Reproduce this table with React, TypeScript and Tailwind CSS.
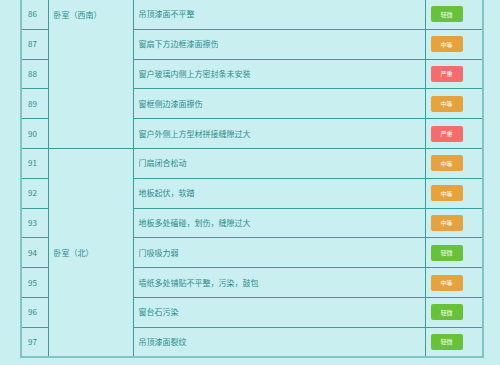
const rows = [
  { no: 86, desc: "吊顶漆面不平整", level: "轻微" },
  { no: 87, desc: "窗扇下方边框漆面擦伤", level: "中等" },
  { no: 88, desc: "窗户玻璃内侧上方密封条未安装", level: "严重" },
  { no: 89, desc: "窗框侧边漆面擦伤", level: "中等" },
  { no: 90, desc: "窗户外侧上方型材拼接缝隙过大", level: "严重" },
  { no: 91, desc: "门扇闭合松动", level: "中等" },
  { no: 92, desc: "地板起伏，软踏", level: "中等" },
  { no: 93, desc: "地板多处磕碰，划伤，缝隙过大", level: "中等" },
  { no: 94, desc: "门吸吸力弱", level: "轻微" },
  { no: 95, desc: "墙纸多处铺贴不平整，污染，鼓包", level: "中等" },
  { no: 96, desc: "窗台石污染", level: "轻微" },
  { no: 97, desc: "吊顶漆面裂纹", level: "轻微" },
];

const badgeColor: Record<string, string> = {
  轻微: "bg-[#67c23a]",
  中等: "bg-[#e6a23c]",
  严重: "bg-[#f56c6c]",
};

function Badge({ level }: { level: string }) {
  return (
    <span
      className={`inline-flex h-4 w-8 items-center justify-center rounded-[2px] text-[6px] text-white ${badgeColor[level]}`}
    >
      {level}
    </span>
  );
}

export default function App() {
  return (
    <div
      className="h-[365px] w-[500px] overflow-hidden bg-[#c9eff1] pl-5"
      style={{ fontFamily: '"Noto Sans CJK SC", "Noto Sans", sans-serif' }}
    >
      <table className="-mt-px w-[462px] table-fixed border-collapse border-x-2 border-b-2 border-x-[#80c4c4] border-b-[#80c4c4] text-[8px] text-[#2e8c8c]">
        <colgroup>
          <col className="w-[27px]" />
          <col className="w-[85px]" />
          <col className="w-[292px]" />
          <col className="w-[58px]" />
        </colgroup>
        <tbody>
          {rows.map((r, i) => (
            <tr key={r.no} className="h-[29.8px]">
              <td className="border border-[#3a9d99] pl-[6px] align-middle">{r.no}</td>
              {i === 0 && (
                <td
                  rowSpan={5}
                  className="border border-[#3a9d99] px-[5px] pt-[9px] align-top"
                >
                  卧室（西南）
                </td>
              )}
              {i === 5 && (
                <td rowSpan={7} className="border border-[#3a9d99] px-[5px] align-middle">
                  卧室（北）
                </td>
              )}
              <td className="border border-[#3a9d99] pl-[5px] align-middle">{r.desc}</td>
              <td className="border border-[#3a9d99] pl-[5px] align-middle">
                <Badge level={r.level} />
              </td>
            </tr>
          ))}
        </tbody>
      </table>
    </div>
  );
}
